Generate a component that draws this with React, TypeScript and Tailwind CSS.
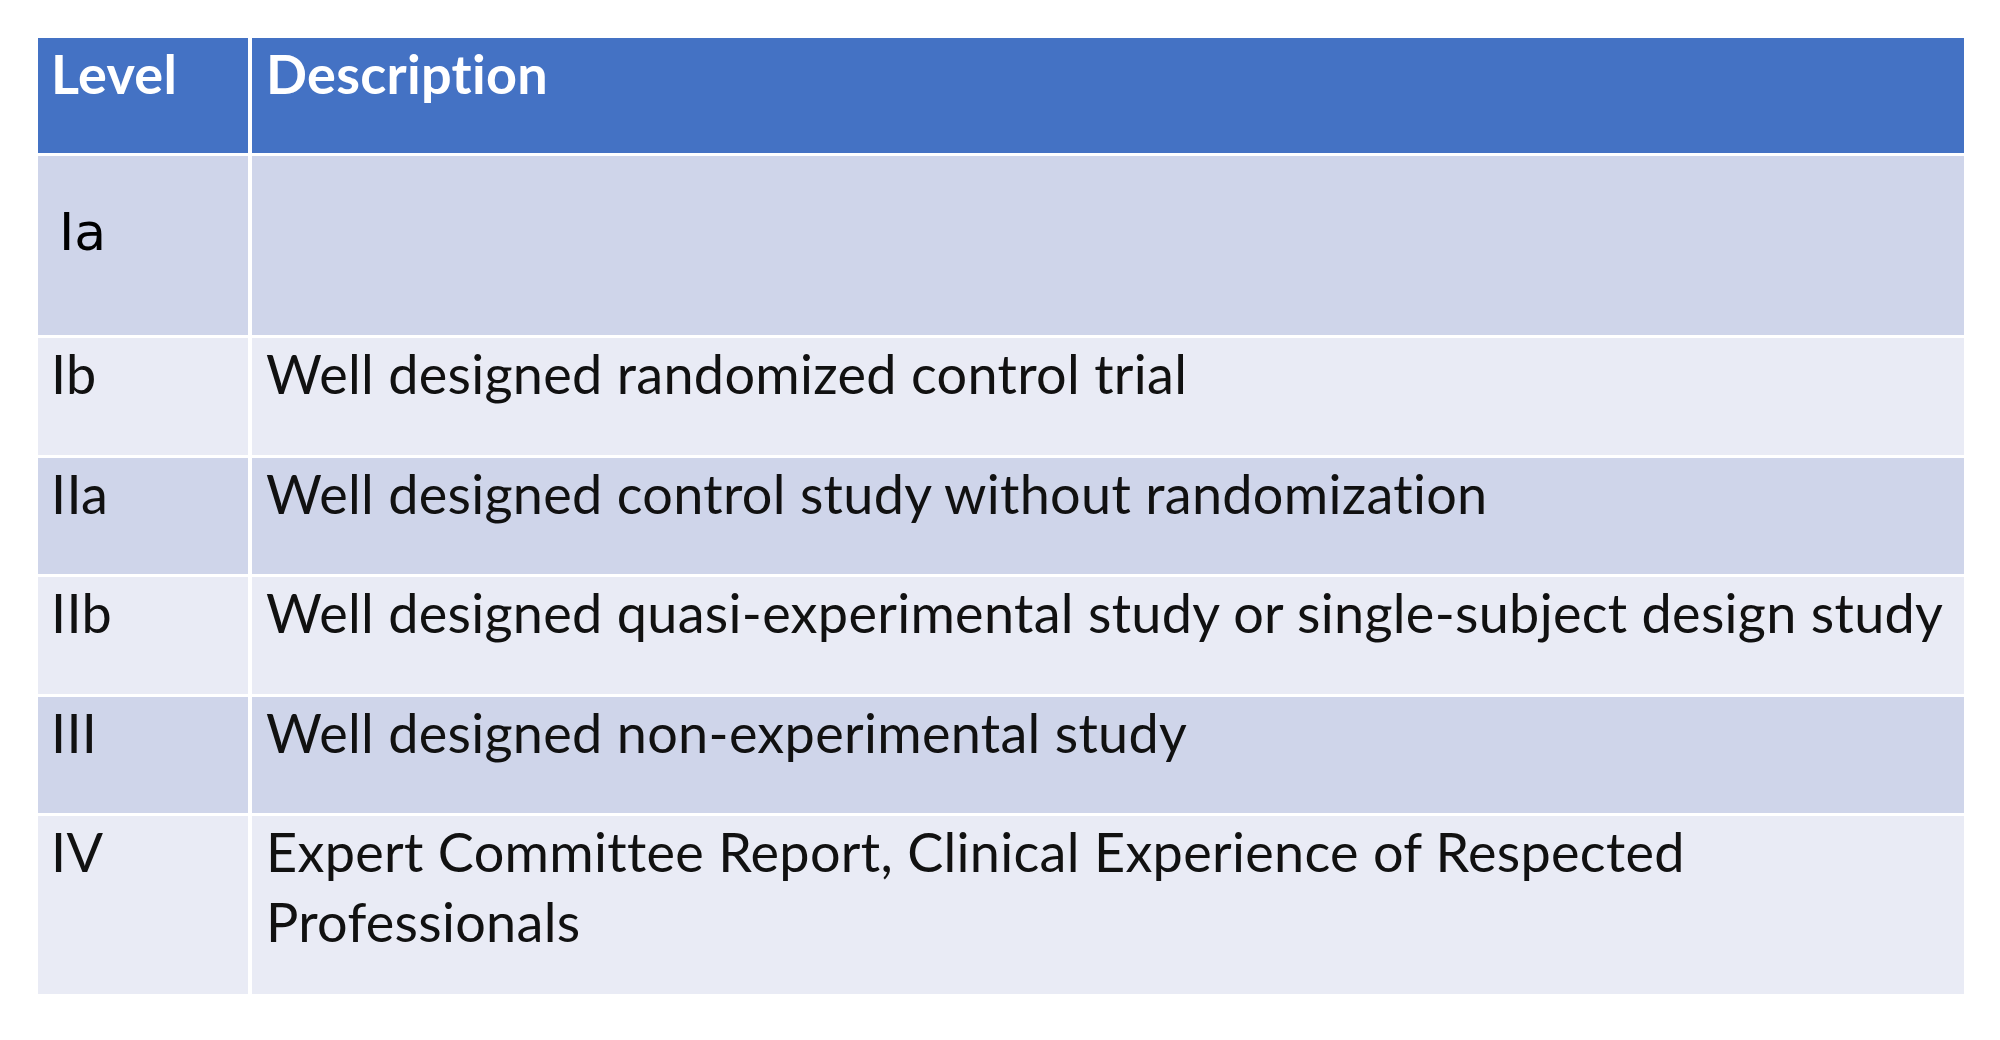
const rows = [
  { level: "Ib", text: ["Well designed randomized control trial"], dark: false, h: "h-[117px]" },
  { level: "IIa", text: ["Well designed control study without randomization"], dark: true, h: "h-[116px]" },
  {
    level: "IIb",
    text: ["Well designed quasi-experimental study or single-subject design study"],
    dark: false,
    h: "h-[117px]",
  },
  { level: "III", text: ["Well designed non-experimental study"], dark: true, h: "h-[116px]" },
  {
    level: "IV",
    text: ["Expert Committee Report, Clinical Experience of Respected", "Professionals"],
    dark: false,
    h: "h-[178px]",
  },
];

export default function App() {
  return (
    <div className="min-h-screen w-full bg-white font-['Lato',sans-serif] text-[54px] leading-[70px] tracking-[0.3px] text-[#111111]">
      <div className="pl-[38px] pt-[38px]">
        <div className="flex w-[1926px] flex-col gap-[3px]">
          {/* header */}
          <div className="flex h-[115px] gap-[4px] font-bold text-white">
            <div className="w-[210px] bg-[#4472c4] pl-[13px] pt-[1px]">Level</div>
            <div className="flex-1 bg-[#4472c4] pl-[14px] pt-[1px]">Description</div>
          </div>

          {/* row Ia, filled in by hand */}
          <div className="flex h-[179px] gap-[4px]">
            <div className="w-[210px] bg-[#cfd5ea] pl-[21px] pt-[41px] font-['DejaVu_Sans',sans-serif] text-[52px] tracking-normal text-black">
              Ia
            </div>
            <div className="flex-1 bg-[#cfd5ea]"></div>
          </div>

          {rows.map((r) => (
            <div key={r.level} className={`flex gap-[4px] ${r.h}`}>
              <div className={`w-[210px] pl-[13px] pt-[1px] ${r.dark ? "bg-[#cfd5ea]" : "bg-[#e9ebf5]"}`}>
                {r.level}
              </div>
              <div className={`flex-1 pl-[14px] pt-[1px] ${r.dark ? "bg-[#cfd5ea]" : "bg-[#e9ebf5]"}`}>
                {r.text.map((line) => (
                  <div key={line}>{line}</div>
                ))}
              </div>
            </div>
          ))}
        </div>
      </div>
    </div>
  );
}
